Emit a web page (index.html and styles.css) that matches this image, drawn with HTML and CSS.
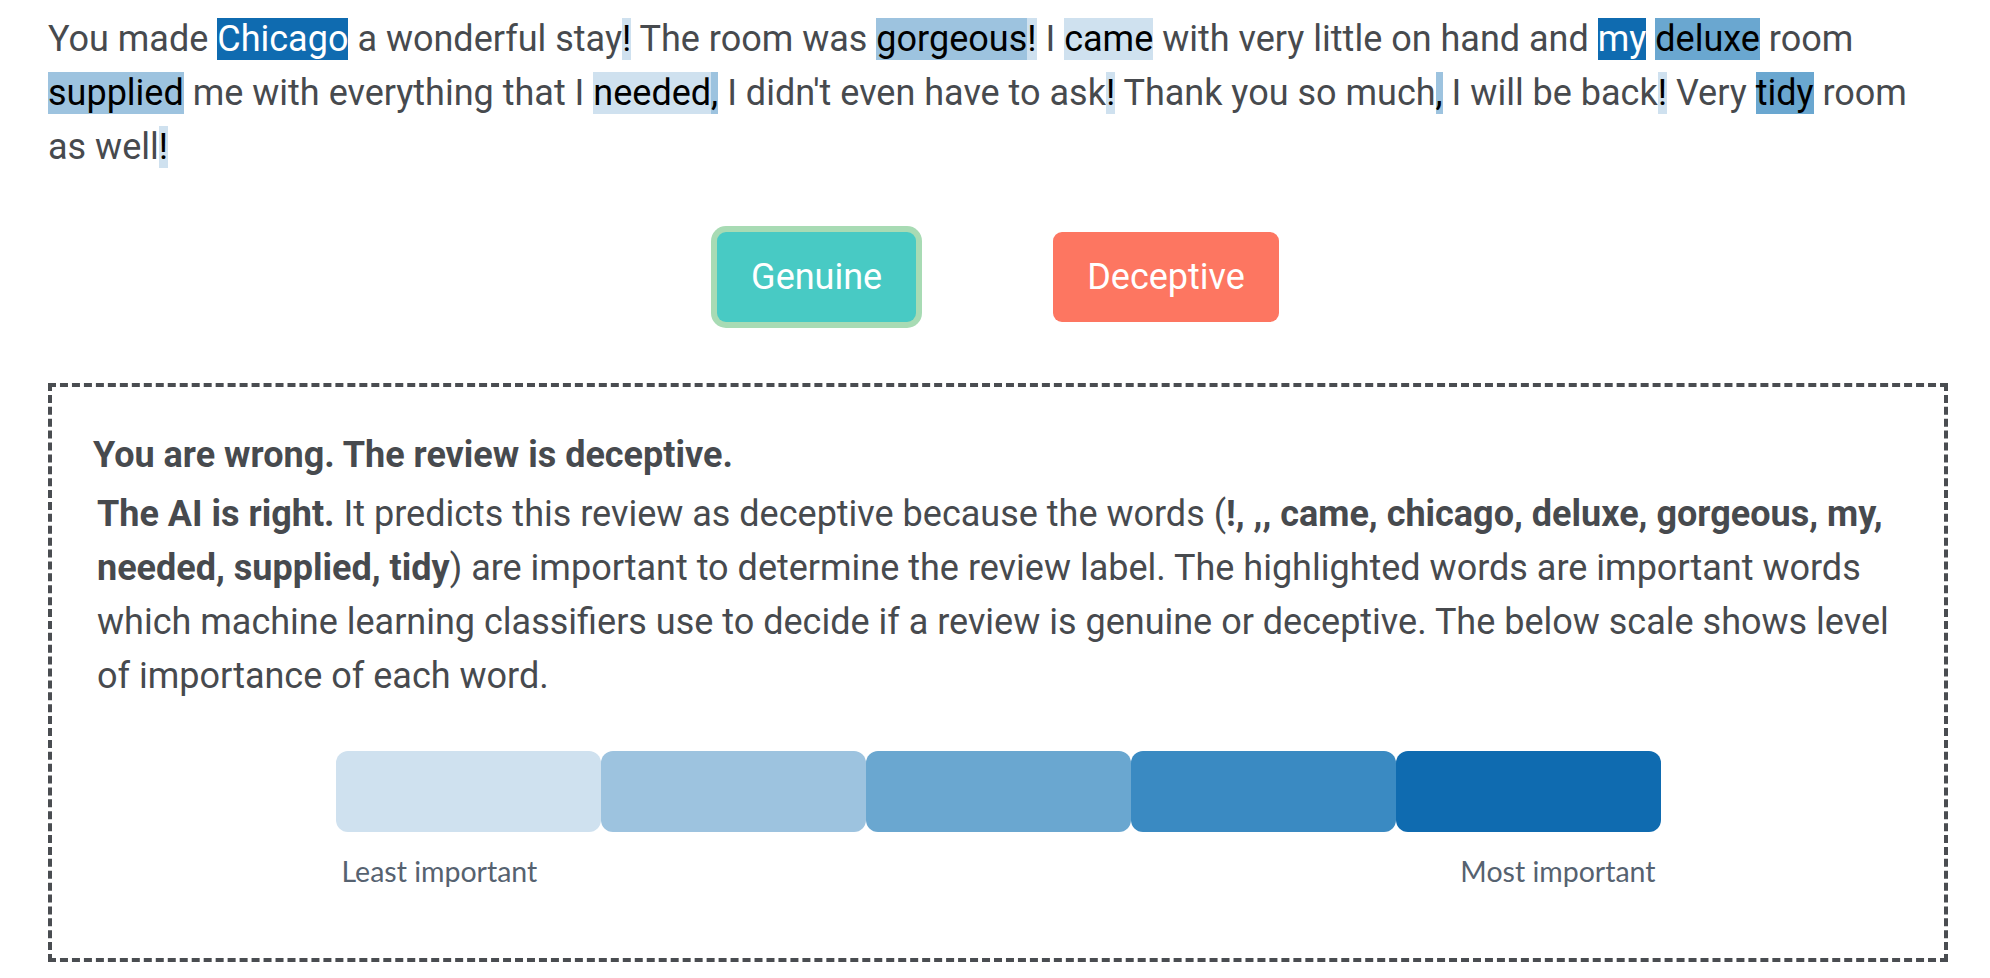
FILE: index.html
```html
<!DOCTYPE html>
<html lang="en">
<head>
<meta charset="utf-8">
<title>Review</title>
<link rel="stylesheet" href="styles.css">
</head>
<body>
<main class="page">
  <p class="review">You made <span class="hl w5">Chicago</span> a wonderful stay<span class="hl w1">!</span> The room was <span class="hl w2">gorgeous</span><span class="hl w1">!</span> I <span class="hl w1">came</span> with very little on hand and <span class="hl w5">my</span> <span class="hl w3">deluxe</span> room <span class="hl w2">supplied</span> me with everything that I <span class="hl w1">needed</span><span class="hl w2">,</span> I didn't even have to ask<span class="hl w1">!</span> Thank you so much<span class="hl w2">,</span> I will be back<span class="hl w1">!</span> Very <span class="hl w3">tidy</span> room as well<span class="hl w1">!</span></p>

  <div class="choices">
    <button class="choice genuine selected">Genuine</button>
    <button class="choice deceptive">Deceptive</button>
  </div>

  <section class="feedback">
    <h2 class="verdict">You are wrong. The review is deceptive.</h2>
    <p class="explain"><strong>The AI is right.</strong> It predicts this review as deceptive because the words (<strong>!, ,, came, chicago, deluxe, gorgeous, my, needed, supplied, tidy</strong>) are important to determine the review label. The highlighted words are important words which machine learning classifiers use to decide if a review is genuine or deceptive. The below scale shows level of importance of each word.</p>
    <div class="scale">
      <div class="seg w1"></div>
      <div class="seg w2"></div>
      <div class="seg w3"></div>
      <div class="seg w4"></div>
      <div class="seg w5"></div>
    </div>
    <div class="scale-labels">
      <span>Least important</span>
      <span>Most important</span>
    </div>
  </section>
</main>
</body>
</html>
```
FILE: styles.css
```css
* { box-sizing: border-box; }
html, body { margin: 0; padding: 0; background: #fff; }
body {
  font-family: Roboto, "Noto Sans", sans-serif;
  color: #474a4e;
}
.page {
  width: 1900px;
  margin-left: 48px;
  padding-top: 12px;
}
.review {
  margin: 0;
  font-size: 36px;
  line-height: 54px;
}
.hl { color: #000; }
.hl.w5 { color: #fff; }
.w1 { background: #cfe1ef; }
.w2 { background: #9dc3df; }
.w3 { background: #6aa7d0; }
.w4 { background: #3a8ac2; }
.w5 { background: #0f6bb0; }

.choices {
  display: flex;
  justify-content: center;
  gap: 137px;
  margin-top: 58px;
}
.choice {
  font-family: Roboto, sans-serif;
  font-size: 36px;
  color: #fff;
  border: none;
  border-radius: 9px;
  height: 90px;
  padding: 0 34px;
  cursor: pointer;
}
.genuine { background: #48cac4; }
.deceptive { background: #fd7661; }
.selected { box-shadow: 0 0 0 6px #a8dbb4; }

.feedback {
  margin-top: 61px;
  border: 4px dashed #4a4d51;
  padding: 41px 41px 0;
  height: 579px;
}
.verdict {
  margin: 0;
  font-size: 36px;
  line-height: 54px;
  font-weight: 700;
}
.explain {
  margin: 5px 0 0;
  padding-left: 4px;
  font-size: 36px;
  line-height: 54px;
}
.explain strong { font-weight: 700; }
.scale {
  display: flex;
  width: 1325px;
  margin: 48px auto 0;
  height: 81px;
}
.seg {
  flex: 1;
  border-radius: 12px;
}
.scale-labels {
  width: 1325px;
  margin: 22px auto 0;
  display: flex;
  justify-content: space-between;
  font-family: Lato, sans-serif;
  font-size: 28.5px;
  line-height: 1.2;
  color: #566270;
  padding: 0 5px 0 6px;
}
```
